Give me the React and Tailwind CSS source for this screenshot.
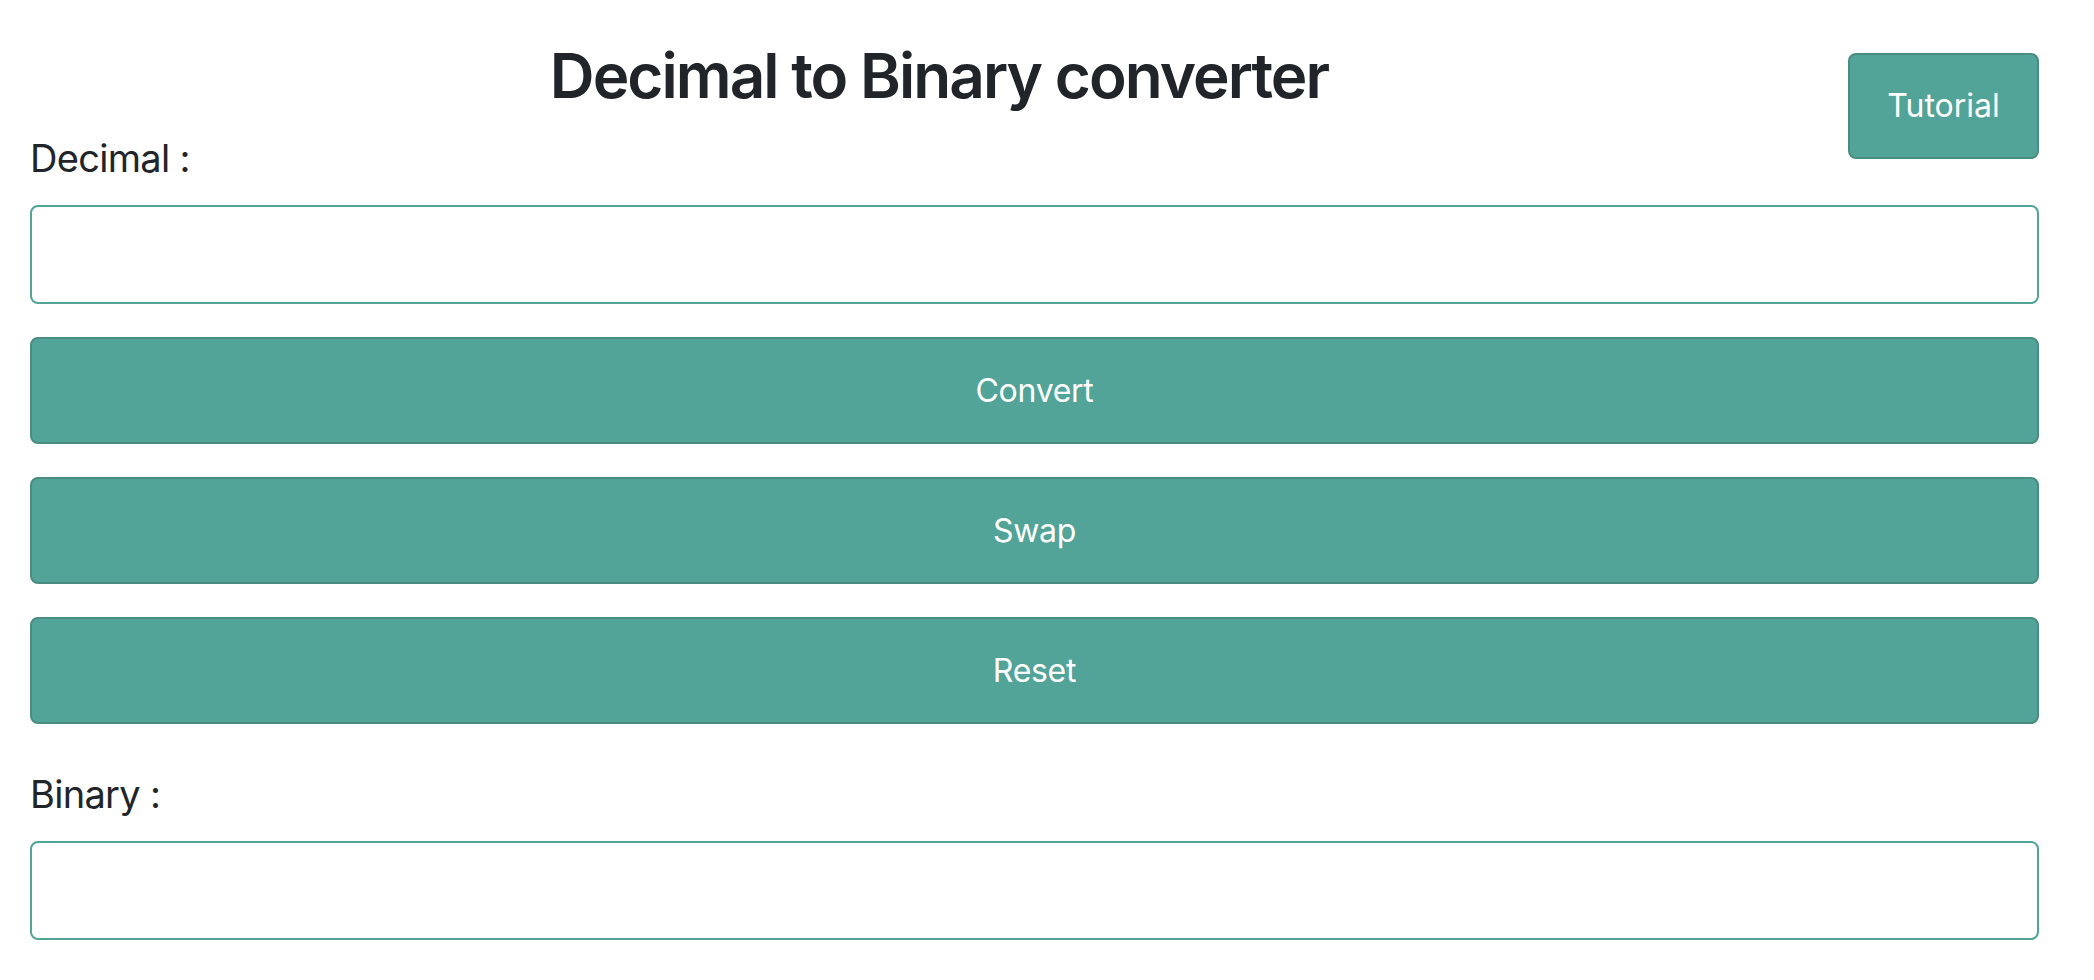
export default function App() {
  return (
    <div
      className="min-h-screen bg-white pt-[37px] pl-[30px] pr-[55px] text-[#212529]"
      style={{ fontFamily: 'Inter, "Noto Sans", "Liberation Sans", sans-serif' }}
    >
      <div className="flex items-start">
        <h2 className="flex-1 text-center text-[62px] font-semibold leading-[77px] tracking-[-1.95px]">
          Decimal to Binary converter
        </h2>
        <button className="mt-[16px] mb-[-45px] flex h-[106px] w-[191px] items-center justify-center rounded-[8px] border-2 border-[#4a8c82] bg-[#52a398] text-[32px] leading-[48px] text-white">
          Tutorial
        </button>
      </div>

      <label className="mt-[14px] block text-[38px] leading-[60px] tracking-[-0.7px]">Decimal :</label>
      <input
        type="text"
        className="mt-[17px] block h-[99px] w-full rounded-[8px] border-2 border-[#52a398] bg-white px-[24px] text-[32px] outline-none"
      />

      <div className="mt-[33px] flex flex-col gap-[33px]">
        <button className="flex h-[107px] w-full items-center justify-center rounded-[8px] border-2 border-[#4a8c82] bg-[#52a398] text-[32px] leading-[48px] tracking-[-0.3px] text-white">
          Convert
        </button>
        <button className="flex h-[107px] w-full items-center justify-center rounded-[8px] border-2 border-[#4a8c82] bg-[#52a398] text-[32px] leading-[48px] tracking-[-0.3px] text-white">
          Swap
        </button>
        <button className="flex h-[107px] w-full items-center justify-center rounded-[8px] border-2 border-[#4a8c82] bg-[#52a398] text-[32px] leading-[48px] tracking-[-0.3px] text-white">
          Reset
        </button>
      </div>

      <label className="mt-[40px] block text-[38px] leading-[60px] tracking-[-0.7px]">Binary :</label>
      <input
        type="text"
        className="mt-[17px] block h-[99px] w-full rounded-[8px] border-2 border-[#52a398] bg-white px-[24px] text-[32px] outline-none"
      />
    </div>
  );
}
